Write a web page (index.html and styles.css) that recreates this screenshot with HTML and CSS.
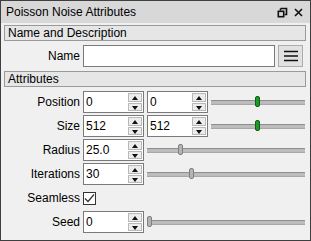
FILE: index.html
```html
<!DOCTYPE html>
<html>
    <head>
        <link rel="stylesheet" href="styles.css">
    </head>
    <body>
        <div class="window">
            <div class="titlebar">
                <span class="title">Poisson Noise Attributes</span>
                <svg class="tb-icon" width="11" height="11" viewBox="0 0 11 11">
                    <path d="M3.5 1.5h6v6h-2M3.5 1.5v2" fill="none" stroke="#111" stroke-width="1.6"/>
                    <rect x="1.3" y="4.3" width="5.4" height="5.4" fill="none" stroke="#111" stroke-width="1.6"/>
                </svg>
                <svg class="tb-icon" width="11" height="11" viewBox="0 0 11 11">
                    <path d="M2 2l7 7M9 2l-7 7" stroke="#111" stroke-width="1.6"/>
                </svg>
            </div>
            <div class="content">
                <div class="group">Name and Description</div>
                <div class="row name-row">
                    <label>Name</label>
                    <div class="line-edit"></div>
                    <div class="menu-btn">
                        <svg width="14" height="12" viewBox="0 0 14 12">
                            <path d="M0 1.5h14M0 6h14M0 10.5h14" stroke="#111" stroke-width="1.6"/>
                        </svg>
                    </div>
                </div>
                <div class="group attrs">Attributes</div>
                <div class="row first">
                    <label>Position</label>
                    <div class="spin"><span>0</span><div class="arrows"><i class="up"></i><i class="down"></i></div></div>
                    <div class="spin"><span>0</span><div class="arrows"><i class="up"></i><i class="down"></i></div></div>
                    <div class="slider"><b class="handle green" style="left: 47%"></b></div>
                </div>
                <div class="row">
                    <label>Size</label>
                    <div class="spin"><span>512</span><div class="arrows"><i class="up"></i><i class="down"></i></div></div>
                    <div class="spin"><span>512</span><div class="arrows"><i class="up"></i><i class="down"></i></div></div>
                    <div class="slider"><b class="handle green" style="left: 47%"></b></div>
                </div>
                <div class="row">
                    <label>Radius</label>
                    <div class="spin"><span>25.0</span><div class="arrows"><i class="up"></i><i class="down"></i></div></div>
                    <div class="slider"><b class="handle" style="left: 19.5%"></b></div>
                </div>
                <div class="row">
                    <label>Iterations</label>
                    <div class="spin"><span>30</span><div class="arrows"><i class="up"></i><i class="down"></i></div></div>
                    <div class="slider"><b class="handle" style="left: 26.5%"></b></div>
                </div>
                <div class="row check-row">
                    <label>Seamless</label>
                    <div class="checkbox">
                        <svg width="11" height="11" viewBox="0 0 11 11">
                            <path d="M1 5.5l3 3 6-7" fill="none" stroke="#333" stroke-width="1.2"/>
                        </svg>
                    </div>
                </div>
                <div class="row seed-row">
                    <label>Seed</label>
                    <div class="spin"><span>0</span><div class="arrows"><i class="up"></i><i class="down"></i></div></div>
                    <div class="slider"><b class="handle" style="left: 0%"></b></div>
                </div>
            </div>
        </div>
    </body>
</html>
```

FILE: styles.css
```css
body {
    margin: 0;
    font-family: "Liberation Sans", Arial, sans-serif;
    font-size: 12px;
    color: #000;
}
.window {
    width: 311px;
    height: 241px;
    box-sizing: border-box;
    border: 1px solid #3f3f3f;
    background-color: #f0f0f0;
}
.titlebar {
    height: 22px;
    background-color: #d8d8d8;
    display: flex;
    align-items: center;
    padding: 0 6px 0 5px;
    gap: 5px;
}
.title {
    flex: 1;
}
.content {
    padding: 2px 4px 0 3px;
}
.group {
    height: 14px;
    line-height: 14px;
    border: 1px solid #9a9a9a;
    background-color: #e6e6e6;
    padding-left: 3px;
}
.group.attrs {
    margin-top: 4px;
}
.row {
    display: flex;
    align-items: center;
    height: 22px;
    margin-top: 2px;
}
.row.first {
    margin-top: 4px;
}
.row label {
    width: 76px;
    text-align: right;
    margin-right: 3px;
    flex: none;
}
.name-row {
    margin-top: 4px;
}
.line-edit {
    width: 190px;
    height: 20px;
    border: 1px solid #7a7a7a;
    background-color: #fff;
}
.menu-btn {
    width: 23px;
    height: 20px;
    margin-left: 3px;
    border: 1px solid #adadad;
    background-color: #e1e1e1;
    display: flex;
    align-items: center;
    justify-content: center;
}
.spin {
    width: 59px;
    height: 20px;
    border: 1px solid #7a7a7a;
    background-color: #fff;
    display: flex;
    margin-right: 3px;
    flex: none;
}
.spin span {
    flex: 1;
    padding-left: 2px;
    line-height: 20px;
}
.arrows {
    width: 14px;
    padding: 1px 1px 1px 0;
    display: flex;
    flex-direction: column;
    gap: 1px;
}
.arrows i {
    flex: 1;
    border: 1px solid #b9b9b9;
    background-color: #ececec;
    position: relative;
}
.arrows i::after {
    content: "";
    position: absolute;
    left: 3px;
    top: 2px;
    border-left: 3px solid transparent;
    border-right: 3px solid transparent;
}
.arrows .up::after {
    border-bottom: 4px solid #111;
}
.arrows .down::after {
    border-top: 4px solid #111;
}
.slider {
    flex: 1;
    height: 3px;
    background-color: #bcbcbc;
    border-top: 1px solid #8e8e8e;
    border-bottom: 1px solid #a8a8a8;
    position: relative;
    margin-right: 1px;
}
.handle {
    position: absolute;
    top: -5px;
    width: 3px;
    height: 9px;
    border: 1px solid #808080;
    border-radius: 2px;
    background-color: #b4b4b4;
}
.handle.green {
    background-color: #1d9a25;
    border-color: #0f5e13;
}
.check-row {
    height: 18px;
    margin-top: 4px;
}
.seed-row {
    margin-top: 4px;
}
.checkbox {
    width: 11px;
    height: 11px;
    border: 1px solid #333;
    background-color: #fff;
    display: flex;
}
```
